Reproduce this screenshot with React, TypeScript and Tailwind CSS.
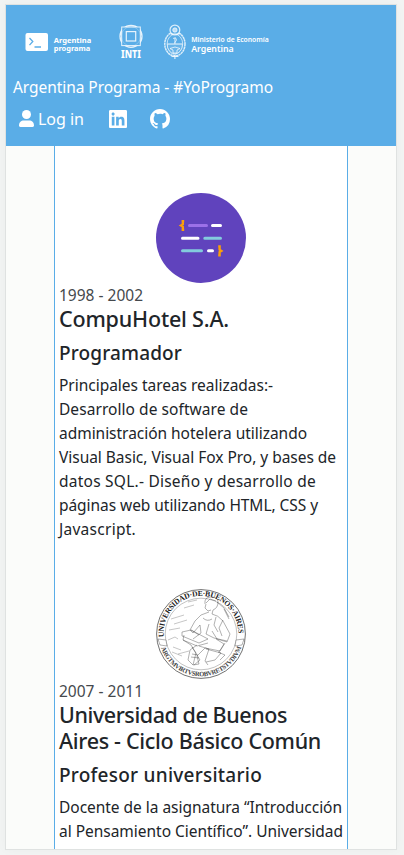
import { useLayoutEffect, useRef, useState } from 'react';

type LineProps = { text: string; width: number; className?: string };

// A single line of text whose tracking is computed to fill the given width.
function Line({ text, width, className = '' }: LineProps) {
  const ref = useRef<HTMLSpanElement>(null);
  const [tracking, setTracking] = useState(0);
  useLayoutEffect(() => {
    const el = ref.current;
    if (!el) return;
    el.style.letterSpacing = '0px';
    const next = (width - el.getBoundingClientRect().width) / text.length;
    el.style.letterSpacing = `${next}px`;
    setTracking(next);
  }, [text, width]);
  return (
    <span className={`block whitespace-nowrap ${className}`}>
      <span ref={ref} style={{ letterSpacing: tracking }}>{text}</span>
    </span>
  );
}

function ProgramaLogo() {
  return (
    <svg className="h-9 w-[70px]" viewBox="0 0 70 36" fill="white">
      <rect x="0.5" y="9" width="22.5" height="18" rx="2" />
      <path d="M4.5 14l3.3 3.5-3.3 3.6M9.5 23h6.5" fill="none" stroke="#5aade7" strokeWidth="1.3" />
      <g fontFamily="Noto Sans, sans-serif" fontSize="7.6" fontWeight="700">
        <text x="28.7" y="19.2" textLength="37.5" lengthAdjust="spacingAndGlyphs">Argentina</text>
        <text x="28.7" y="26.7" textLength="36.5" lengthAdjust="spacingAndGlyphs">programa</text>
      </g>
    </svg>
  );
}

function IntiLogo() {
  return (
    <svg className="h-9 w-6" viewBox="0 0 24 36" fill="none" stroke="white" strokeOpacity=".85">
      <circle cx="12" cy="12.3" r="11" strokeWidth="1.3" />
      <rect x="2.7" y="3" width="18.6" height="18.6" fill="#5aade7" />
      <circle cx="12" cy="12.3" r="9.7" strokeWidth=".6" strokeOpacity=".4" />
      <rect x="7.3" y="7.6" width="9.4" height="9.4" strokeWidth="1.2" />
      <text x="2" y="33.7" fill="white" stroke="none" fontFamily="Noto Sans, sans-serif" fontSize="10" fontWeight="800" textLength="20" lengthAdjust="spacingAndGlyphs">INTI</text>
    </svg>
  );
}

function MinisterioLogo() {
  return (
    <svg className="h-9 w-28" viewBox="0 0 112 36" fill="none" stroke="white">
      <g strokeOpacity=".8">
        <ellipse cx="11.9" cy="20" rx="10.1" ry="12" strokeWidth="1.5" strokeDasharray="2.4 .4" />
        <ellipse cx="11.9" cy="20" rx="7.8" ry="9.8" strokeWidth=".8" />
        <path d="M4.5 20h15l-1 5-3 4-4 2-4-2-3-5z" fill="white" fillOpacity=".1" strokeWidth=".4" />
        <path d="M4.3 20h15M11.9 14v6M7 24.5l5-1.5 5 1.5-3 1.5v3h-4v-3zM10 14.5l2.5-.8 1 2.3-1.8 3" strokeWidth=".9" />
        <circle cx="11.9" cy="6" r="4.9" fill="#5aade7" strokeWidth="1.2" />
        <circle cx="11.9" cy="6" r="2.2" fill="white" fillOpacity=".6" strokeWidth=".8" />
        <path d="M7.5 10h9M8.5 32.5h7M11.9 31v4" strokeWidth="1.2" />
      </g>
      <g fill="white" stroke="none" fontFamily="Noto Sans, sans-serif">
        <text x="28.2" y="18.4" fontSize="7.1" fontWeight="600" textLength="77.5" lengthAdjust="spacingAndGlyphs">Ministerio de Economía</text>
        <text x="28.2" y="27.8" fontSize="9.6" fontWeight="600" textLength="42.5" lengthAdjust="spacingAndGlyphs">Argentina</text>
      </g>
    </svg>
  );
}

function CodeBadge() {
  return (
    <svg className="mx-auto block size-[90px]" viewBox="0 0 90 90" fill="none" strokeWidth="3" strokeLinecap="round">
      <circle cx="45" cy="45" r="45" fill="#6043bd" />
      <path d="M33.5 32.5h17" stroke="#9b71e8" />
      <path d="M56.5 32.5h8M26.5 45.3h15.5M52.5 57.8h4" stroke="white" />
      <path d="M48.8 45.3h15.7M26.5 57.8h19" stroke="#83cbdd" />
      <g stroke="#fb9f09" strokeWidth="2.4" strokeLinecap="butt">
        <path d="M28.2 28.2h-1.4v3.2l-1.8 1.1 1.8 1.1v3.2h1.4" />
        <path d="M62.2 53.4h1.4v3.3l1.8 1.2-1.8 1.2v3.3h-1.4" />
      </g>
    </svg>
  );
}

function UniversitySeal() {
  return (
    <svg className="mx-auto block size-[90px]" viewBox="0 0 90 90" fill="none" stroke="#333">
      <defs>
        <path id="seal-top" d="M7.9 48A37.3 37.3 0 1 1 82.1 48" />
        <path id="seal-bottom" d="M4.1 56A42.4 42.4 0 0 0 85.9 56" />
      </defs>
      <circle cx="45" cy="45" r="44.4" strokeWidth=".7" />
      <circle cx="45" cy="45" r="35.8" strokeWidth=".5" strokeOpacity=".6" />
      <g fill="#222" stroke="none" fontFamily="Liberation Serif, serif" fontWeight="700">
        <text fontSize="7.6" textLength="121"><textPath href="#seal-top" textLength="121">UNIVERSIDAD·DE·BUENOS·AIRES</textPath></text>
        <text fontSize="6.6" textLength="105" fill="#444"><textPath href="#seal-bottom" startOffset="3" textLength="105">ARGTMVIRTVSROBVRETSTVDIVM</textPath></text>
      </g>
      <g strokeWidth=".7" strokeOpacity=".55">
        <path d="M49 15q-1-7 6-7t7 5q0 6-5 8l-1 4q6 1 11 7l7 13-3 8-10-3-5-8M50 14l4-4 6 2M50 15l-1 4 3 3 3-1M53 23l-8 3-6 6-5 9 3 3 7-8 1 8-8 6M47 29q4 4 9 1M60 28l-2 8 4 7M53 35l-3 10 8 4 13 3M67 31l-4 8 3 8" />
        <path d="M26 43l9-2 17 9-9 4-17-7zM35 41l8 5M28 46l-1 5 14 6 11-3M27 51l8 5 5 8-3 12M41 56l-7 5-2 10 5 5 6-1-2-8 8-8 15 3 5-8M43 57l10 3-4 12 3 4M50 60l15 4-6 7-9 2M60 50l8 5-5 8M36 58l8 13-6 5M36 65l6 1M35 68l8 1M62 63l7 3-5 5M68 20l5 10M61 13l7 6 5 9" />
        <path d="M15 30l13-4M18 35l13-4M28 19l10-3M13 41l11-2M32 13l9-2M12 51l7-3 3 2M17 58l8 3M16 63l10 4M22 65l11-3" strokeOpacity=".4" />
        <path d="M2 50l8 1 1 6-7-1zM88 50l-8 1-1 6 7-1z" fill="white" />
      </g>
    </svg>
  );
}

type Job = { years: string; name: LineProps[]; role: LineProps; lines: LineProps[] };

const jobs: Job[] = [
  {
    years: '1998 - 2002',
    name: [{ text: 'CompuHotel S.A.', width: 170 }],
    role: { text: 'Programador', width: 123 },
    lines: [
      { text: 'Principales tareas realizadas:-', width: 214 },
      { text: 'Desarrollo de software de', width: 189 },
      { text: 'administración hotelera utilizando', width: 248 },
      { text: 'Visual Basic, Visual Fox Pro, y bases de', width: 277 },
      { text: 'datos SQL.- Diseño y desarrollo de', width: 257 },
      { text: 'páginas web utilizando HTML, CSS y', width: 259 },
      { text: 'Javascript.', width: 77 },
    ],
  },
  {
    years: '2007 - 2011',
    name: [
      { text: 'Universidad de Buenos', width: 228 },
      { text: 'Aires - Ciclo Básico Común', width: 262 },
    ],
    role: { text: 'Profesor universitario', width: 203 },
    lines: [
      { text: 'Docente de la asignatura “Introducción', width: 283 },
      { text: 'al Pensamiento Científico”. Universidad', width: 284 },
      { text: 'de Buenos Aires. Ciclo Básico Común.', width: 272 },
    ],
  },
];

export default function App() {
  return (
    <div className="h-[855px] w-full overflow-hidden bg-[#f2f4f3] pt-1 pr-[7px] pb-[5px] pl-[5px] font-['Noto_Sans',sans-serif] text-[#212529]">
      <div className="flex h-full flex-col overflow-hidden border border-[#dfe2e1] bg-[#fbfcfa] shadow-[0_0_10px_rgba(0,0,0,0.03)]">
        <header className="h-[141px] shrink-0 bg-[#5aade7] text-white">
          <div className="flex pt-[19px] pl-[19px]">
            <ProgramaLogo />
            <div className="ml-6"><IntiLogo /></div>
            <div className="ml-5"><MinisterioLogo /></div>
          </div>
          <div className="mt-[15px] pl-[7px] text-[15.5px] leading-6">
            <Line text="Argentina Programa - #YoProgramo" width={260} />
          </div>
          <nav className="mt-2 flex h-6 items-center pl-[13px]">
            <svg className="-mt-px h-[17px] w-[15px]" viewBox="0 0 16 18" fill="currentColor" preserveAspectRatio="none">
              <circle cx="8" cy="4.8" r="4.8" />
              <path d="M0 16.5C0 12.5 2.4 11 5 11h6c2.6 0 5 1.5 5 5.5 0 1-.5 1.5-1.5 1.5h-13C.5 18 0 17.5 0 16.5z" />
            </svg>
            <div className="ml-1 text-[16px] leading-6"><Line text="Log in" width={46} /></div>
            <svg className="ml-[25px] size-[18px]" viewBox="0 32 448 448" fill="currentColor">
              <path d="M416 32H31.9C14.3 32 0 46.5 0 64.3v383.4C0 465.5 14.3 480 31.9 480H416c17.6 0 32-14.5 32-32.3V64.3c0-17.8-14.4-32.3-32-32.3zM135.4 416H69V202.2h66.5V416zm-33.2-243c-21.3 0-38.5-17.3-38.5-38.5S80.9 96 102.2 96c21.2 0 38.5 17.3 38.5 38.5 0 21.3-17.2 38.5-38.5 38.5zm282.1 243h-66.4V312c0-24.8-.5-56.7-34.5-56.7-34.6 0-39.9 27-39.9 54.9V416h-66.4V202.2h63.7v29.2h.9c8.9-16.8 30.6-34.5 62.9-34.5 67.2 0 79.7 44.3 79.7 101.9V416z" />
            </svg>
            <svg className="ml-[23px] size-5" viewBox="0 0 16 16" fill="currentColor">
              <path d="M8 0C3.58 0 0 3.58 0 8c0 3.54 2.29 6.53 5.47 7.59.4.07.55-.17.55-.38v-1.49c-2.01.37-2.53-.49-2.69-.94-.09-.23-.48-.94-.82-1.13-.28-.15-.68-.52-.01-.53.63-.01 1.08.58 1.23.82.72 1.21 1.87.87 2.33.66.07-.52.28-.87.51-1.07-1.78-.2-3.64-.89-3.64-3.95 0-.87.31-1.59.82-2.15-.08-.2-.36-1.02.08-2.12 0 0 .67-.21 2.2.82A7.6 7.6 0 0 1 8 3.86c.68 0 1.36.09 2 .27 1.53-1.04 2.2-.82 2.2-.82.44 1.1.16 1.92.08 2.12.51.56.82 1.27.82 2.15 0 3.07-1.87 3.75-3.65 3.95.29.25.54.73.54 1.48v2.2c0 .21.15.46.55.38A8.01 8.01 0 0 0 16 8c0-4.42-3.58-8-8-8z" />
            </svg>
          </nav>
        </header>
        <main className="mx-12 w-[294px] flex-1 border-x border-[#5aade7] bg-white px-1">
          {jobs.map((job, i) => (
            <section key={job.years} className="pt-[47px]">
              {i === 0 ? <CodeBadge /> : <UniversitySeal />}
              <div className="text-[15.5px] leading-6 text-[#45494d]">
                <Line text={job.years} width={84} />
              </div>
              <h2 className="-mt-px text-[21.5px] leading-[26px] font-[540]">
                {job.name.map((l) => <Line key={l.text} {...l} />)}
              </h2>
              <h3 className="mt-[9px] text-[19px] leading-6 font-[550]"><Line {...job.role} /></h3>
              <div className="mt-2 pb-px text-[15.5px] leading-6">
                {job.lines.map((l) => <Line key={l.text} {...l} />)}
              </div>
            </section>
          ))}
        </main>
      </div>
    </div>
  );
}
